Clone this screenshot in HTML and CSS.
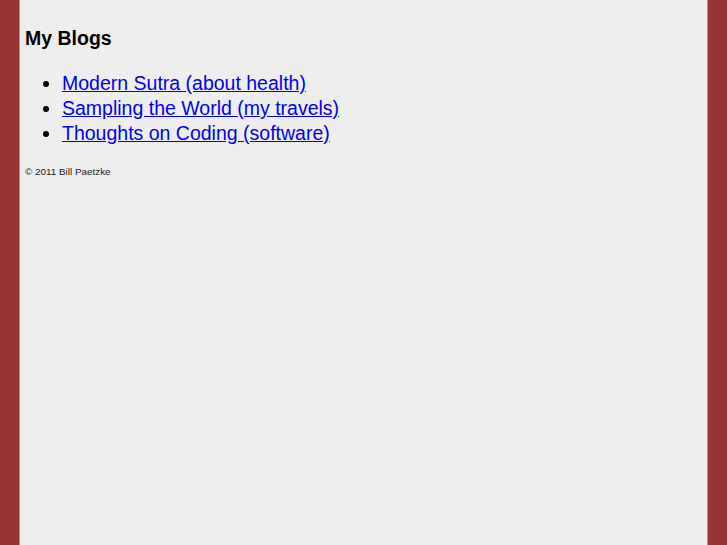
FILE: index.html
```html
<!DOCTYPE html>
<html>
<head>
<meta charset="utf-8">
<title>My Blogs</title>
<link rel="stylesheet" href="styles.css">
</head>
<body>
<div class="page">
  <h2 class="title">My Blogs</h2>
  <ul class="blogs">
    <li><a href="#">Modern Sutra (about health)</a></li>
    <li><a href="#">Sampling the World (my travels)</a></li>
    <li><a href="#">Thoughts on Coding (software)</a></li>
  </ul>
  <p class="footer">© 2011 Bill Paetzke</p>
</div>
</body>
</html>
```

FILE: styles.css
```css
html, body {
  margin: 0;
  padding: 0;
  height: 100%;
}
body {
  background: #993333;
  font-family: "Liberation Sans", Arial, sans-serif;
}
.page {
  margin: 0 19px;
  min-height: 100%;
  box-sizing: border-box;
  background: #eeeeee;
  border-left: 1px solid #9a9a9a;
  border-right: 1px solid #9a9a9a;
  padding: 26px 5px 0 5px;
  overflow: hidden;
}
.title {
  margin: 0;
  font-size: 19.5px;
  font-weight: bold;
  color: #000;
  line-height: 24px;
}
.blogs {
  margin: 21px 0 0 0;
  padding-left: 37px;
  font-size: 19.5px;
  line-height: 25px;
}
.blogs a {
  color: #0000ee;
}
.footer {
  margin: 19px 0 0 0;
  font-size: 9.9px;
  line-height: 14px;
  color: #222;
}
```
